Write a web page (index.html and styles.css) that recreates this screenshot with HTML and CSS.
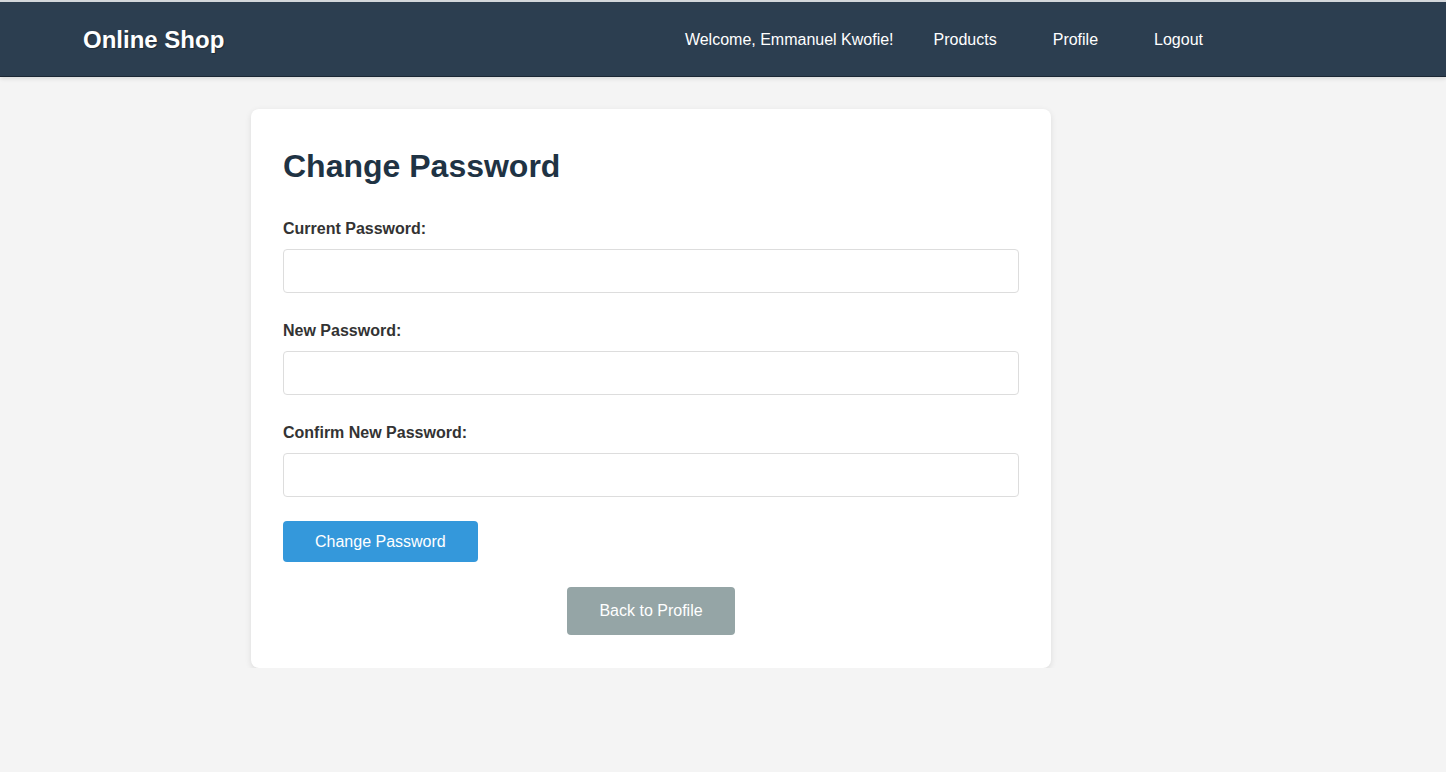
FILE: index.html
```html
<!DOCTYPE html>
<html lang="en">
<head>
    <meta charset="UTF-8">
    <meta name="viewport" content="width=device-width, initial-scale=1.0">
    <title>Change Password - Online Shop</title>
    <link rel="stylesheet" href="styles.css">
</head>
<body>
    <header>
        <div class="container nav-bar">
            <a href="#" class="logo">Online Shop</a>
            <nav>
                <span class="welcome">Welcome, Emmanuel Kwofie!</span>
                <a href="#">Products</a>
                <a href="#">Profile</a>
                <a href="#">Logout</a>
            </nav>
        </div>
    </header>

    <main class="card">
        <h1>Change Password</h1>
        <form>
            <div class="form-group">
                <label for="current">Current Password:</label>
                <input type="password" id="current">
            </div>
            <div class="form-group">
                <label for="new">New Password:</label>
                <input type="password" id="new">
            </div>
            <div class="form-group">
                <label for="confirm">Confirm New Password:</label>
                <input type="password" id="confirm">
            </div>
            <button type="submit" class="btn btn-primary">Change Password</button>
        </form>
        <div class="back">
            <a href="#" class="btn btn-secondary">Back to Profile</a>
        </div>
    </main>
</body>
</html>
```

FILE: styles.css
```css
body {
    font-family: "Liberation Sans", Arial, sans-serif;
    margin: 0;
    padding: 0;
    background-color: #f4f4f4;
    color: #333;
    border-top: 2px solid #d3d7db;
}
header {
    background-color: #2c3e50;
    color: #fff;
    height: 72px;
    padding-top: 2px;
    border-bottom: 1px solid #1b2734;
    box-shadow: 0 2px 4px rgba(0, 0, 0, 0.1);
}
.container {
    max-width: 1280px;
    margin: 0 auto;
}
.nav-bar {
    display: flex;
    align-items: center;
    justify-content: space-between;
    height: 100%;
}
.logo {
    color: #fff;
    text-decoration: none;
    font-size: 24px;
    font-weight: bold;
    text-shadow: 1px 1px 1px rgba(0, 0, 0, 0.35);
}
nav {
    display: flex;
    align-items: center;
    padding-right: 160px;
}
nav .welcome {
    margin-right: 40px;
    font-size: 16px;
}
nav a {
    color: #fff;
    text-decoration: none;
    font-size: 16px;
    margin-left: 56px;
}
nav .welcome + a {
    margin-left: 0;
}
.card {
    display: block;
    width: 736px;
    margin: 32px 0 0 251px;
    background: #fff;
    padding: 32px 32px 33px;
    border-radius: 8px;
    box-shadow: 0 2px 6px rgba(0, 0, 0, 0.1);
}
h1 {
    color: #1f3344;
    font-size: 32px;
    margin: 7px 0 35px;
}
.form-group + .form-group {
    margin-top: 29px;
}
label {
    display: block;
    font-weight: bold;
    font-size: 16px;
    margin-bottom: 11px;
    color: #333;
}
input {
    display: block;
    width: 100%;
    height: 44px;
    box-sizing: border-box;
    border: 1px solid #ddd;
    border-radius: 4px;
    padding: 10px;
    font-size: 16px;
}
.btn {
    display: inline-block;
    border: none;
    border-radius: 4px;
    color: #fff;
    font-family: inherit;
    font-size: 16px;
    text-decoration: none;
    cursor: pointer;
}
.btn-primary {
    background-color: #3498db;
    padding: 11px 32px;
    line-height: 19px;
    margin-top: 24px;
}
.btn-secondary {
    background-color: #95a5a6;
    padding: 15px 32px;
}
.back {
    text-align: center;
    margin-top: 25px;
}
```
